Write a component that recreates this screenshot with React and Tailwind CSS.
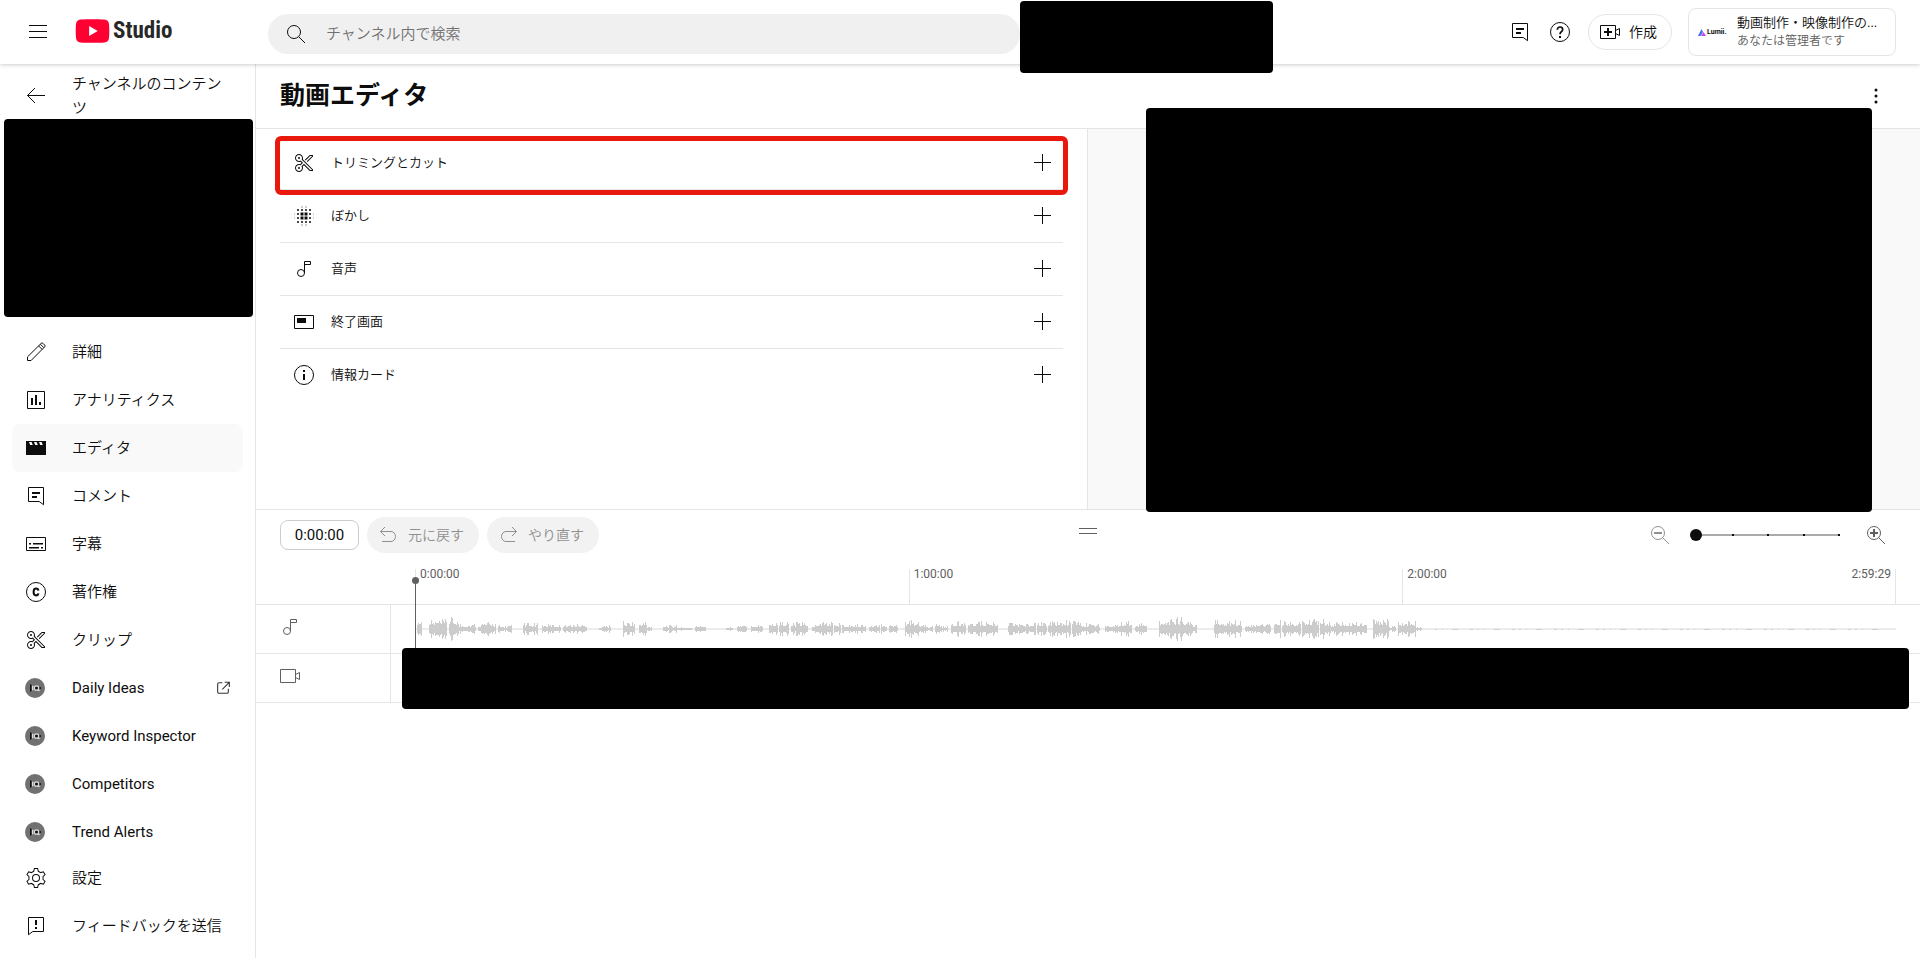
import { useState } from 'react';

const ICONS = {
  menu: <path d="M21 6H3V5h18v1zm0 6H3v-1h18v1zm0 6H3v-1h18v1z" />,
  search: (
    <g fill="none" stroke="currentColor">
      <circle cx="10" cy="10" r="6.5" />
      <path d="M14.7 14.7 21 21" />
    </g>
  ),
  back: <path fill="none" stroke="currentColor" d="M11 4l-7.5 7.5L11 19M3.5 11.5H21" />,
  comment: (
    <>
      <path fill="none" stroke="currentColor" d="M4.5 3.5h15v17.2L15.2 17.5H4.5z" />
      <path d="M8 8h8v2H8zM8 12h5v2H8z" />
    </>
  ),
  help: (
    <g fill="none" stroke="currentColor">
      <circle cx="12" cy="12" r="9.5" />
      <path strokeWidth="1.7" d="M9.3 9.8c0-1.7 1.1-2.8 2.7-2.8s2.7 1 2.7 2.5c0 2.1-2.7 2.3-2.7 4.8" />
      <path strokeWidth="2" d="M12 16v2" />
    </g>
  ),
  create: (
    <>
      <path fill="none" stroke="currentColor" d="M2.5 5.5h15v13h-15zM17.5 10.5l4-2v7l-4-2" />
      <path d="M9 8h2v3h3v2h-3v3H9v-3H6v-2h3z" />
    </>
  ),
  more: <path d="M12 16.5a1.5 1.5 0 110 3 1.5 1.5 0 010-3zm0-6a1.5 1.5 0 110 3 1.5 1.5 0 010-3zm0-6a1.5 1.5 0 110 3 1.5 1.5 0 010-3z" />,
  edit: (
    <g fill="none" stroke="currentColor">
      <path d="M3.5 20.5v-3.6L17.2 3.3a1.2 1.2 0 011.7 0l1.8 1.8a1.2 1.2 0 010 1.7L7.1 20.5z" />
      <path d="M14.6 5.9l3.5 3.5M16.3 4.2l3.5 3.5" />
    </g>
  ),
  analytics: (
    <>
      <path fill="none" stroke="currentColor" d="M3.5 3.5h17v17h-17z" />
      <path d="M7 10h2v7H7zM11 7h2v10h-2zM15 14h2v3h-2z" />
    </>
  ),
  editor: <path fillRule="evenodd" d="M2 5h20v14H2zM5 6l1.2 3h2.6L7.6 6zM10 6l1.2 3h2.6l-1.2-3zM15 6l1.2 3h2.6l-1.2-3z" />,
  subtitles: (
    <>
      <path fill="none" stroke="currentColor" d="M2.5 5.5h19v13h-19z" />
      <path d="M5 11h2v1.500H5zM9 11h10v1.500H9zM5 15h10v1.500H5zM17 15h2v1.500h-2z" />
    </>
  ),
  copyright: (
    <g fill="none" stroke="currentColor">
      <circle cx="12" cy="12" r="9.5" />
      <path strokeWidth="2" d="M14.4 10.6c-.2-1.2-1.1-2-2.3-2-1.6 0-2.5 1.3-2.5 3.4s.9 3.4 2.5 3.4c1.2 0 2.1-.8 2.3-2" />
    </g>
  ),
  cut: (
    <path
      fillRule="evenodd"
      d="M8 7a1 1 0 11-2 0 1 1 0 012 0zm-1 9a1 1 0 100 2 1 1 0 000-2zm3.79-7.77L21 18.44V20h-3.27l-5.76-5.76-1.27 1.27c.19.46.3.96.3 1.49 0 2.21-1.79 4-4 4s-4-1.79-4-4 1.79-4 4-4c.42 0 .81.08 1.19.2l1.37-1.37-1.11-1.11C8 10.89 7.51 11 7 11c-2.21 0-4-1.79-4-4s1.79-4 4-4 4 1.79 4 4c0 .43-.09.84-.21 1.23zm-.71.71-.43-.44.19-.6C9.95 7.58 10 7.28 10 7c0-1.65-1.35-3-3-3S4 5.35 4 7s1.35 3 3 3c.36 0 .73-.07 1.09-.21l.61-.24 2.28 2.28-2.08 2.08-.43.43-.58-.18C7.55 14.05 7.27 14 7 14c-1.65 0-3 1.35-3 3s1.35 3 3 3 3-1.35 3-3c0-.38-.07-.75-.22-1.12l-.25-.61.47-.47 1.98-1.98L18.15 19H20v-.15zM17.73 4H21v1.56l-5.52 5.52-.71-.71L20 5.15V5h-1.85l-4.51 4.51-.7-.71z"
    />
  ),
  settings: (
    <path
      fillRule="evenodd"
      d="M12 9a3 3 0 110 6 3 3 0 010-6m0-1a4 4 0 100 8 4 4 0 000-8zM13.22 3l.55 2.2.13.51.5.18c.61.23 1.19.56 1.72.98l.4.32.5-.14 2.17-.62 1.22 2.11-1.63 1.59-.37.36.08.51c.05.32.08.64.08.98s-.03.66-.08.98l-.08.51.37.36 1.63 1.59-1.22 2.11-2.17-.62-.5-.14-.4.32c-.53.43-1.11.76-1.72.98l-.5.18-.13.51-.55 2.24h-2.44l-.55-2.2-.13-.51-.5-.18c-.6-.23-1.18-.56-1.72-.99l-.4-.32-.5.14-2.17.62-1.21-2.12 1.63-1.59.37-.36-.08-.51c-.05-.32-.08-.65-.08-.98s.03-.66.08-.98l.08-.51-.37-.36L3.6 8.56l1.22-2.11 2.17.62.5.14.4-.32c.53-.44 1.11-.77 1.72-.99l.5-.18.13-.51L10.78 3zM14 2h-4l-.74 2.96c-.73.27-1.4.66-1.99 1.14l-2.93-.84-2 3.46 2.19 2.13c-.06.38-.09.76-.09 1.15s.03.77.09 1.14l-2.19 2.13 2 3.46 2.93-.84c.6.48 1.27.87 1.99 1.14L10 22h4l.74-2.96c.73-.27 1.39-.66 1.99-1.14l2.93.84 2-3.46-2.19-2.13c.06-.37.09-.75.09-1.14s-.03-.77-.09-1.14l2.19-2.13-2-3.46-2.93.82c-.6-.48-1.27-.87-1.99-1.14z"
    />
  ),
  feedback: (
    <>
      <path fill="none" stroke="currentColor" d="M4.5 20.7V3.5h15v14H8.8z" />
      <path d="M11 6h2v5h-2zM11 13h2v2h-2z" />
    </>
  ),
  external: (
    <path fill="none" stroke="currentColor" strokeWidth="1.6" d="M11 4H6a2 2 0 00-2 2v12a2 2 0 002 2h12a2 2 0 002-2v-5M14.5 3.5h7v7M21 4L11 14" />
  ),
  blur: (
    <>
      <path d="M8.500 8.500h3v3h-3zM12.500 8.500h3v3h-3zM8.500 12.500h3v3h-3zM12.500 12.500h3v3h-3z" />
      <path
        strokeWidth="2"
        stroke="currentColor"
        strokeDasharray="2 2"
        opacity=".75"
        d="M5 6h14M5 10h14M5 14h14M5 18h14"
      />
      <path opacity=".2" d="M9 2h2v2H9zM13 2h2v2h-2zM9 20h2v2H9zM13 20h2v2h-2zM2 9h1v2H2zM2 13h1v2H2zM21 9h1v2h-1zM21 13h1v2h-1z" />
    </>
  ),
  note: (
    <g fill="none" stroke="currentColor">
      <circle cx="9" cy="16" r="3.5" />
      <path d="M12.5 16V4.5h6v3h-6" />
    </g>
  ),
  endScreen: (
    <>
      <path fill="none" stroke="currentColor" d="M2.5 5.5h19v13h-19z" />
      <path d="M5 8h9v5H5z" />
    </>
  ),
  info: (
    <>
      <circle cx="12" cy="12" r="9.5" fill="none" stroke="currentColor" />
      <path d="M11 7h2v2h-2zM11 11h2v6h-2z" />
    </>
  ),
  plus: <path d="M20 12h-8v8h-1v-8H3v-1h8V3h1v8h8z" />,
  undo: <path fill="none" stroke="currentColor" d="M8 4L3.5 8.5 8 13M3.5 8.5h10.5a4.5 5 0 010 10H5" />,
  redo: <path fill="none" stroke="currentColor" d="M15 4l4.5 4.5L15 13M19.5 8.500H9a4.5 5 0 000 10h9" />,
  zoomOut: (
    <g fill="none" stroke="currentColor">
      <circle cx="10" cy="10" r="6.5" />
      <path d="M14.7 14.7 21 21" />
      <path strokeWidth="2" d="M6 10h8" />
    </g>
  ),
  zoomIn: (
    <g fill="none" stroke="currentColor">
      <circle cx="10" cy="10" r="6.5" />
      <path d="M14.7 14.7 21 21" />
      <path strokeWidth="2" d="M6 10h8M10 6v8" />
    </g>
  ),
  video: <path fill="none" stroke="currentColor" d="M2.5 5.5h15v13h-15zM17.5 10.5l4-2v7l-4-2" />,
};

function Icon({ name, className = 'size-6' }) {
  return (
    <svg viewBox="0 0 24 24" fill="currentColor" aria-hidden="true" className={`shrink-0 ${className}`}>
      {ICONS[name]}
    </svg>
  );
}

function ExtensionIcon() {
  return (
    <svg viewBox="0 0 24 24" aria-hidden="true" className="size-6 shrink-0">
      <circle cx="11" cy="12" r="10" fill="#717171" />
      <path d="M6 8l3 2v4l-3 2z" fill="#111" />
      <path d="M8.5 9.5v5" stroke="#ddd" strokeWidth="1.5" />
      <circle cx="12.5" cy="12" r="2.2" fill="#111" stroke="#ddd" strokeWidth="1.3" />
      <path d="M14 13.5l1.5 1.5" stroke="#ddd" strokeWidth="1.3" />
      <path d="M15.5 10.5l2 1.5-2 1.500z" fill="#111" />
    </svg>
  );
}

const navItems = [
  { label: '詳細', icon: 'edit' },
  { label: 'アナリティクス', icon: 'analytics' },
  { label: 'エディタ', icon: 'editor', active: true },
  { label: 'コメント', icon: 'comment' },
  { label: '字幕', icon: 'subtitles' },
  { label: '著作権', icon: 'copyright' },
  { label: 'クリップ', icon: 'cut' },
  { label: 'Daily Ideas', external: true },
  { label: 'Keyword Inspector' },
  { label: 'Competitors' },
  { label: 'Trend Alerts' },
];

const footerItems = [
  { label: '設定', icon: 'settings' },
  { label: 'フィードバックを送信', icon: 'feedback' },
];

const tools = [
  { label: 'トリミングとカット', icon: 'cut', highlighted: true },
  { label: 'ぼかし', icon: 'blur' },
  { label: '音声', icon: 'note' },
  { label: '終了画面', icon: 'endScreen' },
  { label: '情報カード', icon: 'info' },
];

// [start, end, peak] of each stretch of sound
const bursts = [
  [2, 6, 11], [14, 31, 10], [34, 42, 12], [43, 60, 6], [63, 80, 7], [83, 96, 4], [108, 122, 6],
  [127, 145, 5], [148, 171, 5], [184, 195, 4], [208, 219, 8], [224, 231, 8], [232, 236, 3],
  [248, 261, 4], [262, 276, 2], [280, 290, 4], [311, 317, 2], [322, 331, 4], [336, 347, 5],
  [354, 362, 7], [364, 373, 8], [376, 392, 7], [397, 403, 5], [404, 417, 8], [419, 425, 6],
  [427, 428, 10], [429, 450, 5], [454, 464, 4], [466, 471, 6], [474, 482, 5], [490, 503, 9],
  [504, 517, 4], [520, 526, 6], [527, 532, 3], [536, 550, 8], [553, 582, 8], [593, 606, 7],
  [607, 620, 6], [622, 631, 7], [633, 655, 9], [657, 665, 9], [666, 684, 6], [690, 704, 5],
  [705, 716, 8], [720, 731, 6], [744, 755, 10], [756, 777, 12], [777, 781, 4], [799, 826, 9],
  [830, 847, 5], [848, 855, 6], [859, 865, 9], [867, 885, 8], [887, 903, 10], [905, 908, 10],
  [909, 922, 7], [923, 930, 8], [931, 951, 7], [958, 973, 12], [974, 980, 3], [983, 992, 8],
  [993, 1000, 9], [1000, 1006, 2],
];

const wavePath = bursts
  .map(([start, end, peak]) => {
    let d = '';
    for (let x = start; x <= end; x++) {
      const noise = Math.abs(Math.sin(x * 12.9898) * 43758.5453) % 1;
      const h = Math.max(1, Math.round(peak * (0.35 + 0.65 * noise * noise)));
      d += `M${x} ${20 - h}h1v${h * 2}h-1z`;
    }
    return d;
  })
  .join('');

function NavItem({ label, icon, active, external }) {
  return (
    <li>
      <a
        href="#"
        aria-current={active ? 'page' : undefined}
        className={`mx-3 flex h-12 items-center rounded-lg px-3 ${active ? 'bg-[#f9f9f9]' : ''}`}
      >
        {icon ? <Icon name={icon} /> : <ExtensionIcon />}
        <span className="ml-6 flex-1 whitespace-nowrap">{label}</span>
        {external && <Icon name="external" className="size-4 text-[#333]" />}
      </a>
    </li>
  );
}

function Header() {
  return (
    <header className="relative z-10 flex h-16 shrink-0 items-center bg-white shadow-[0_1px_4px_rgba(0,0,0,0.2)]">
      <div className="flex w-64 shrink-0 items-center pl-[26px]">
        <button aria-label="メニュー">
          <Icon name="menu" />
        </button>
        <a href="#" className="ml-[25px] flex items-center gap-[3px] pb-[2px]">
          <svg viewBox="0 0 35 25" aria-hidden="true" className="h-6 w-[35px]">
            <path fill="#ff0033" d="M5 .6C12 0 23 0 30 .6c3 .3 4.400 1.900 4.700 4.900.4 4.500.4 9.500 0 14-.3 3-1.700 4.600-4.700 4.900-7 .6-18 .6-25 0-3-.3-4.400-1.900-4.700-4.900-.4-4.500-.4-9.500 0-14C.6 2.500 2 .9 5 .6z" />
            <path fill="#fff" d="M14 7.300l9 5.200-9 5.200z" />
          </svg>
          <span className="font-['Roboto_Condensed','Liberation_Sans_Narrow',sans-serif] text-[23px] font-bold leading-6 text-[#282828]">Studio</span>
        </a>
      </div>

      <label className="ml-3 mt-1 flex h-10 max-w-[752px] flex-1 items-center rounded-full bg-[#f0f0f0] pl-4">
        <Icon name="search" />
        <input
          type="search"
          aria-label="チャンネル内で検索"
          placeholder="チャンネル内で検索"
          className="ml-[18px] min-w-0 flex-1 bg-transparent text-[15px] outline-none placeholder:text-[#717171]"
        />
      </label>

      <div className="ml-auto flex items-center pr-6">
        <button aria-label="コメント" className="mr-4">
          <Icon name="comment" />
        </button>
        <button aria-label="ヘルプ" className="mr-4">
          <Icon name="help" />
        </button>
        <button className="mr-4 flex h-9 items-center gap-[7px] rounded-full border border-[#e5e5e5] pl-[9px] pr-[14px] text-sm">
          <Icon name="create" />
          作成
        </button>
        <button className="flex h-12 w-[208px] items-center rounded-lg border border-[#e5e5e5] pl-[9px] pr-3 text-left">
          <span className="flex w-[30px] shrink-0 items-center gap-px">
            <svg viewBox="0 0 8 7" aria-hidden="true" className="h-[7px] w-2">
              <path d="M0 7L3.500 0 5 3 2.500 7z" fill="#4a6cf7" />
              <path d="M3 7l2.500-4L8 7z" fill="#c44df0" />
            </svg>
            <span className="text-[7px] font-bold">Lumii.</span>
          </span>
          <span className="ml-[9px] flex-1 whitespace-nowrap">
            <span className="block text-[13px] leading-[18px]">動画制作・映像制作の...</span>
            <span className="block text-xs leading-[18px] text-[#606060]">あなたは管理者です</span>
          </span>
        </button>
      </div>

      <div className="absolute left-[1020px] top-px h-[72px] w-[253px] rounded-[4px] bg-black" />
    </header>
  );
}

function Sidebar() {
  return (
    <nav className="flex w-64 shrink-0 flex-col border-r border-[#e5e5e5] text-[15px]">
      <div className="flex min-h-0 flex-1 flex-col overflow-hidden">
        <a href="#" className="flex h-[55px] shrink-0 items-center pl-6 pr-7 pt-2 leading-6">
          <Icon name="back" />
          <span className="ml-6 flex-1">チャンネルのコンテンツ</span>
        </a>
        <div className="ml-1 mr-[2px] h-[198px] shrink-0 rounded-[4px] bg-black" />
        <ul className="mt-[11px]">
          {navItems.map((item) => (
            <NavItem key={item.label} {...item} />
          ))}
        </ul>
      </div>
      <ul className="pb-2">
        {footerItems.map((item) => (
          <NavItem key={item.label} {...item} />
        ))}
      </ul>
    </nav>
  );
}

function ToolRow({ label, icon, highlighted }) {
  return (
    <li className="relative flex h-[53px] items-center border-b border-[#e5e5e5] pl-3 pr-2 text-[13px] last:border-transparent">
      <Icon name={icon} />
      <span className="ml-[15px] flex-1">{label}</span>
      <button aria-label={`${label}を追加`}>
        <Icon name="plus" />
      </button>
      {highlighted && (
        <span className="pointer-events-none absolute -inset-x-[5px] -bottom-[6px] -top-px rounded-md border-[5px] border-[#e8180c]" />
      )}
    </li>
  );
}

function Toolbar() {
  const [time, setTime] = useState('0:00:00');
  const [zoom, setZoom] = useState(0);

  return (
    <div className="relative flex h-[51px] items-center pb-[2px] pl-6 pr-8">
      <input
        aria-label="再生位置"
        value={time}
        onChange={(e) => setTime(e.target.value)}
        className="h-[30px] w-[79px] rounded-lg border border-[#ccc] text-center text-[15px] outline-none"
      />
      <button disabled className="ml-2 flex h-9 items-center gap-[7px] rounded-full bg-[#f2f2f2] pl-[10px] pr-[15px] text-sm text-[#909090]">
        <Icon name="undo" />
        元に戻す
      </button>
      <button disabled className="ml-2 flex h-9 items-center gap-[7px] rounded-full bg-[#f2f2f2] pl-[10px] pr-[15px] text-sm text-[#909090]">
        <Icon name="redo" />
        やり直す
      </button>

      <div className="absolute left-1/2 top-[18px] h-[6px] w-[18px] -translate-x-1/2 border-y border-[#606060]" />

      <div className="ml-auto flex items-center">
        <button disabled aria-label="縮小" className="text-[#909090]">
          <Icon name="zoomOut" />
        </button>
        <div className="relative mx-[18px] flex h-6 w-[156px] items-center">
          <div className="absolute inset-x-[6px] flex h-[2px] justify-between bg-[#aaa]">
            {[0, 1, 2, 3, 4].map((i) => (
              <span key={i} className="size-[2px] bg-[#0d0d0d]" />
            ))}
          </div>
          <input
            type="range"
            aria-label="ズーム"
            min="0"
            max="4"
            value={zoom}
            onChange={(e) => setZoom(Number(e.target.value))}
            className="relative w-full appearance-none bg-transparent [&::-webkit-slider-thumb]:size-3 [&::-webkit-slider-thumb]:appearance-none [&::-webkit-slider-thumb]:rounded-full [&::-webkit-slider-thumb]:bg-[#0d0d0d]"
          />
        </div>
        <button aria-label="拡大" className="text-[#606060]">
          <Icon name="zoomIn" />
        </button>
      </div>
    </div>
  );
}

function Timeline() {
  return (
    <section className="relative text-[#606060]">
      {/* Ruler */}
      <div className="flex border-b border-[#e5e5e5] pl-[159px] pr-6 pt-2">
        <div className="grid h-[35px] flex-1 grid-cols-3 text-xs leading-[11px]">
          <div className="border-l border-[#e5e5e5] pl-1">0:00:00</div>
          <div className="border-l border-[#e5e5e5] pl-1">1:00:00</div>
          <div className="flex justify-between border-x border-[#e5e5e5] pl-1 pr-1">
            <span>2:00:00</span>
            <span>2:59:29</span>
          </div>
        </div>
      </div>

      {/* Tracks */}
      <div className="flex h-[49px] border-b border-[#e5e5e5]">
        <div className="w-[135px] border-r border-[#e5e5e5] pl-[22px] pt-[10px]">
          <Icon name="note" />
        </div>
        <div className="flex flex-1 items-center pl-6 pr-6">
          <svg viewBox="0 0 1481 40" preserveAspectRatio="none" aria-hidden="true" className="h-10 w-full">
            <path d="M0 19h1481v2H0z" fill="#ececec" />
            <path d="M1020 20.5h455" stroke="#d0d0d0" strokeDasharray="2 5 1 9 6 12 3 4" />
            <path d={wavePath} fill="#ccc" />
          </svg>
        </div>
      </div>
      <div className="flex h-[49px] border-b border-[#e5e5e5]">
        <div className="w-[135px] border-r border-[#e5e5e5] pl-[22px] pt-[10px]">
          <Icon name="video" />
        </div>
      </div>

      {/* Playhead */}
      <div className="absolute bottom-4 left-[159px] top-5 w-px bg-[#606060]">
        <span className="absolute -left-[3px] -top-1 size-[7px] rounded-full bg-[#606060]" />
      </div>
      <div className="absolute -bottom-[6px] left-[146px] right-[11px] h-[61px] rounded-[4px] bg-black" />
    </section>
  );
}

function Editor() {
  return (
    <main className="flex min-w-0 flex-1 flex-col">
      <div className="flex h-[65px] items-center justify-between border-b border-[#e5e5e5] pl-6 pr-8">
        <h1 className="font-['Roboto','Noto_Sans_CJK_JP',sans-serif] text-[25px] font-bold">動画エディタ</h1>
        <button aria-label="その他">
          <Icon name="more" />
        </button>
      </div>

      <div className="flex h-[381px] border-b border-[#e5e5e5]">
        <ul className="w-1/2 border-r border-[#e5e5e5] px-6 pt-2">
          {tools.map((tool) => (
            <ToolRow key={tool.label} {...tool} />
          ))}
        </ul>
        <div className="relative flex-1 bg-[#f9f9f9]">
          <div className="absolute -bottom-[3px] -top-[21px] left-[58px] right-[48px] rounded-[4px] bg-black" />
        </div>
      </div>

      <Toolbar />
      <Timeline />
    </main>
  );
}

export default function App() {
  return (
    <div className="flex h-screen flex-col overflow-hidden bg-white font-['Roboto','Noto_Sans_CJK_JP_DemiLight','Noto_Sans_CJK_JP_Light','Noto_Sans_CJK_JP',sans-serif] text-[#0d0d0d]">
      <Header />
      <div className="flex min-h-0 flex-1">
        <Sidebar />
        <Editor />
      </div>
    </div>
  );
}
